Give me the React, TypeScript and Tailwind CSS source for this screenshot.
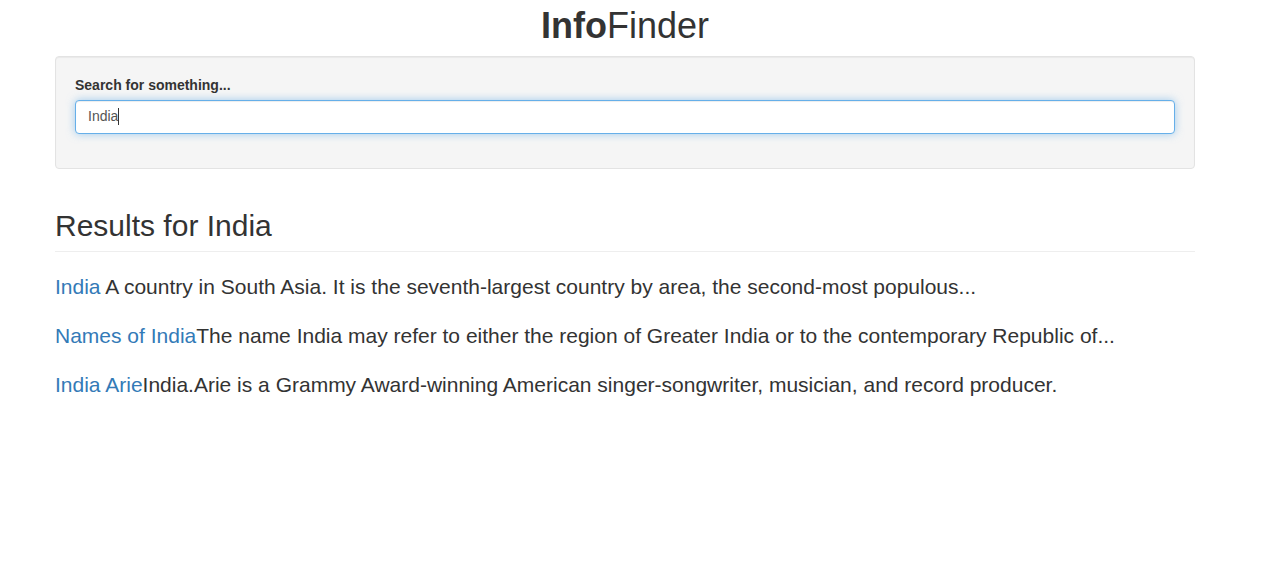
import React from "react";

export default function App() {
  const results = [
    {
      title: "India",
      sep: " ",
      text: "A country in South Asia. It is the seventh-largest country by area, the second-most populous...",
    },
    {
      title: "Names of India",
      sep: "",
      text: "The name India may refer to either the region of Greater India or to the contemporary Republic of...",
    },
    {
      title: "India Arie",
      sep: "",
      text: "India.Arie is a Grammy Award-winning American singer-songwriter, musician, and record producer.",
    },
  ];
  return (
    <div
      className="min-h-[580px] bg-white text-[#333] text-[14px] leading-[1.42857]"
      style={{ fontFamily: '"Liberation Sans", Arial, Helvetica, sans-serif' }}
    >
      <div className="ml-[55px] w-[1140px]">
        <h1 className="pt-[6px] text-center text-[36px] leading-[1.1] mb-[10px] text-[#333]">
          <span className="font-bold">Info</span>
          <span className="font-normal">Finder</span>
        </h1>
        <div className="bg-[#f5f5f5] border border-[#e3e3e3] rounded-[4px] p-[19px] shadow-[inset_0_1px_1px_rgba(0,0,0,0.05)]">
          <div className="mb-[15px]">
            <label className="inline-block font-bold mb-[4px] text-[#333]">Search for something...</label>
            <div className="h-[34px] bg-white border border-[#66afe9] rounded-[4px] px-[12px] flex items-center text-[#555] shadow-[inset_0_1px_1px_rgba(0,0,0,0.075),0_0_8px_rgba(102,175,233,0.6)]">
              <span>India</span>
              <span className="inline-block w-px h-[17px] bg-[#333]" />
            </div>
          </div>
        </div>
        <div className="mt-[40px] pb-[9px] border-b border-[#eee] mb-[20px]">
          <h2 className="text-[30px] leading-[1.1] font-normal">Results for India</h2>
        </div>
        {results.map((r) => (
          <p key={r.title} className="text-[21px] leading-[1.4] mb-[20px] font-light">
            <a href="#" className="text-[#337ab7]">
              {r.title}
            </a>
            {r.sep}
            {r.text}
          </p>
        ))}
      </div>
    </div>
  );
}
